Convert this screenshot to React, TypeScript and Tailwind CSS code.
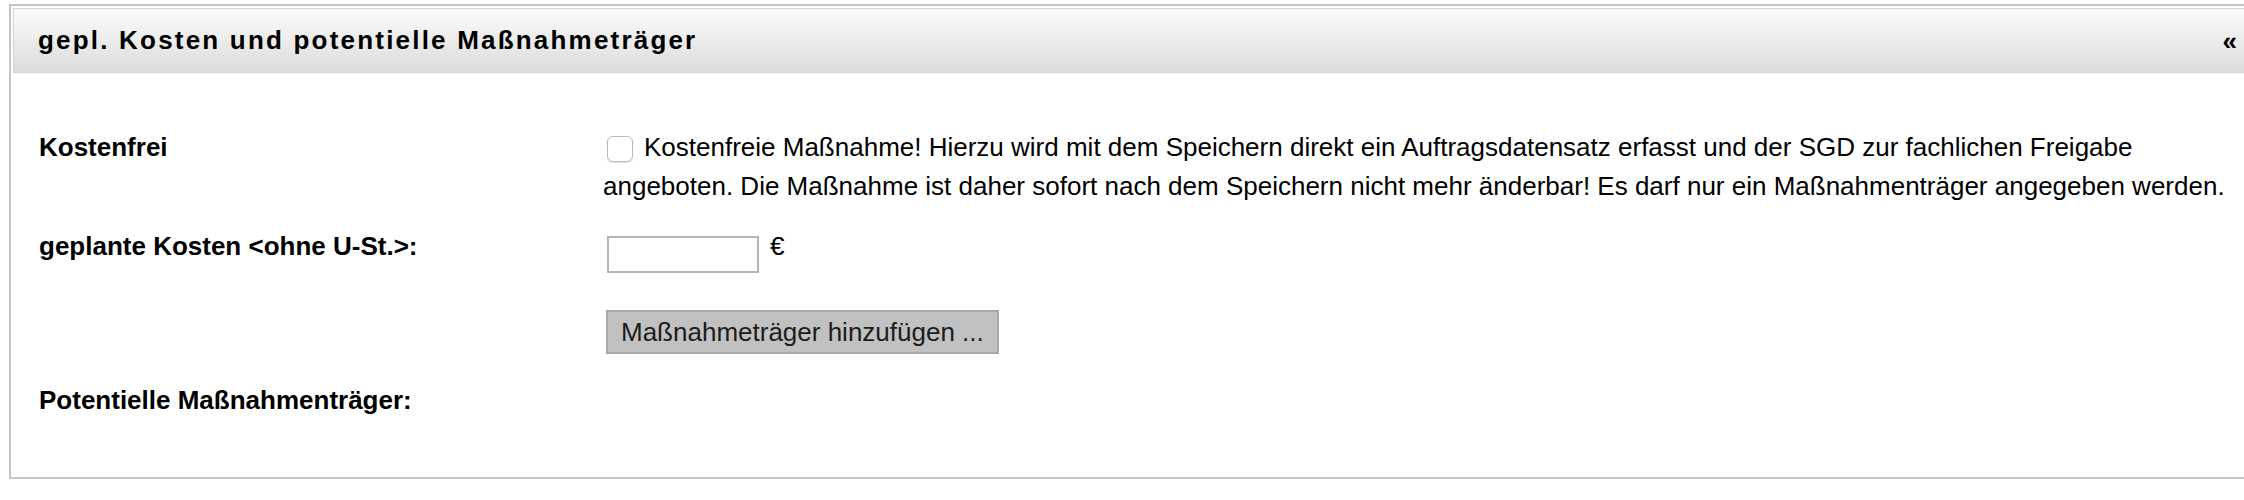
import { useState } from "react";

export default function App() {
  const [free, setFree] = useState(false);
  const [cost, setCost] = useState("");

  return (
    <div className="h-[500px] w-full overflow-hidden bg-white font-['Liberation_Sans',Arial,sans-serif] text-black">
      <div className="ml-[9px] mt-[4px] h-[475px] border-b-2 border-l-2 border-t-2 border-[#c9c5bf] pl-[2px] pt-[2px]">
        {/* panel header */}
        <div className="flex h-[65px] items-center justify-between border-b border-l border-t border-[#d8d3cc] bg-gradient-to-b from-[#fbfbfb] to-[#dcdcdc] pl-[24px] pr-[7px]">
          <h2 className="text-[26px] font-bold tracking-[2.2px]">
            gepl. Kosten und potentielle Maßnahmeträger
          </h2>
          <button type="button" className="text-[26px] font-bold leading-none" aria-label="Einklappen">
            «
          </button>
        </div>

        <div className="flex flex-col pl-[26px] text-[26px]">
          {/* Kostenfrei */}
          <div className="mt-[55px] grid grid-cols-[564px_1fr]">
            <div className="font-bold leading-[39px]">Kostenfrei</div>
            <div className="leading-[39px]">
              <span
                role="checkbox"
                aria-checked={free}
                onClick={() => setFree(!free)}
                className="ml-[4px] mr-[11px] inline-block h-[26px] w-[26px] cursor-pointer rounded-[6px] border-[1.5px] border-[#b9b9b9] bg-white align-[-6px] shadow-[0_1px_1px_rgba(0,0,0,0.1)]"
              />
              Kostenfreie Maßnahme! Hierzu wird mit dem Speichern direkt ein Auftragsdatensatz erfasst und der SGD zur fachlichen Freigabe angeboten. Die Maßnahme ist daher sofort nach dem Speichern nicht mehr änderbar! Es darf nur ein Maßnahmenträger angegeben werden.
            </div>
          </div>

          {/* geplante Kosten */}
          <div className="mt-[21px] grid grid-cols-[564px_1fr]">
            <div className="font-bold leading-[39px]">geplante Kosten &lt;ohne U-St.&gt;:</div>
            <div className="flex items-start leading-[39px]">
              <input
                type="text"
                value={cost}
                onChange={(e) => setCost(e.target.value)}
                className="ml-[4px] mt-[9px] h-[37px] w-[152px] border-2 border-[#b5b5b5] bg-white px-1 text-[22px] outline-none"
              />
              <span className="ml-[11px]">€</span>
            </div>
          </div>

          <div className="mt-[37px] grid grid-cols-[564px_1fr]">
            <div />
            <div>
              <button
                type="button"
                className="ml-[3px] h-[44px] border-2 border-[#a9a9a9] bg-[#c1c1c1] px-[13px] text-[26px] leading-none text-[#1c1c1c]"
              >
                Maßnahmeträger hinzufügen ...
              </button>
            </div>
          </div>

          <div className="mt-[27px] grid grid-cols-[564px_1fr]">
            <div className="font-bold leading-[39px]">Potentielle Maßnahmenträger:</div>
            <div />
          </div>
        </div>
      </div>
    </div>
  );
}
